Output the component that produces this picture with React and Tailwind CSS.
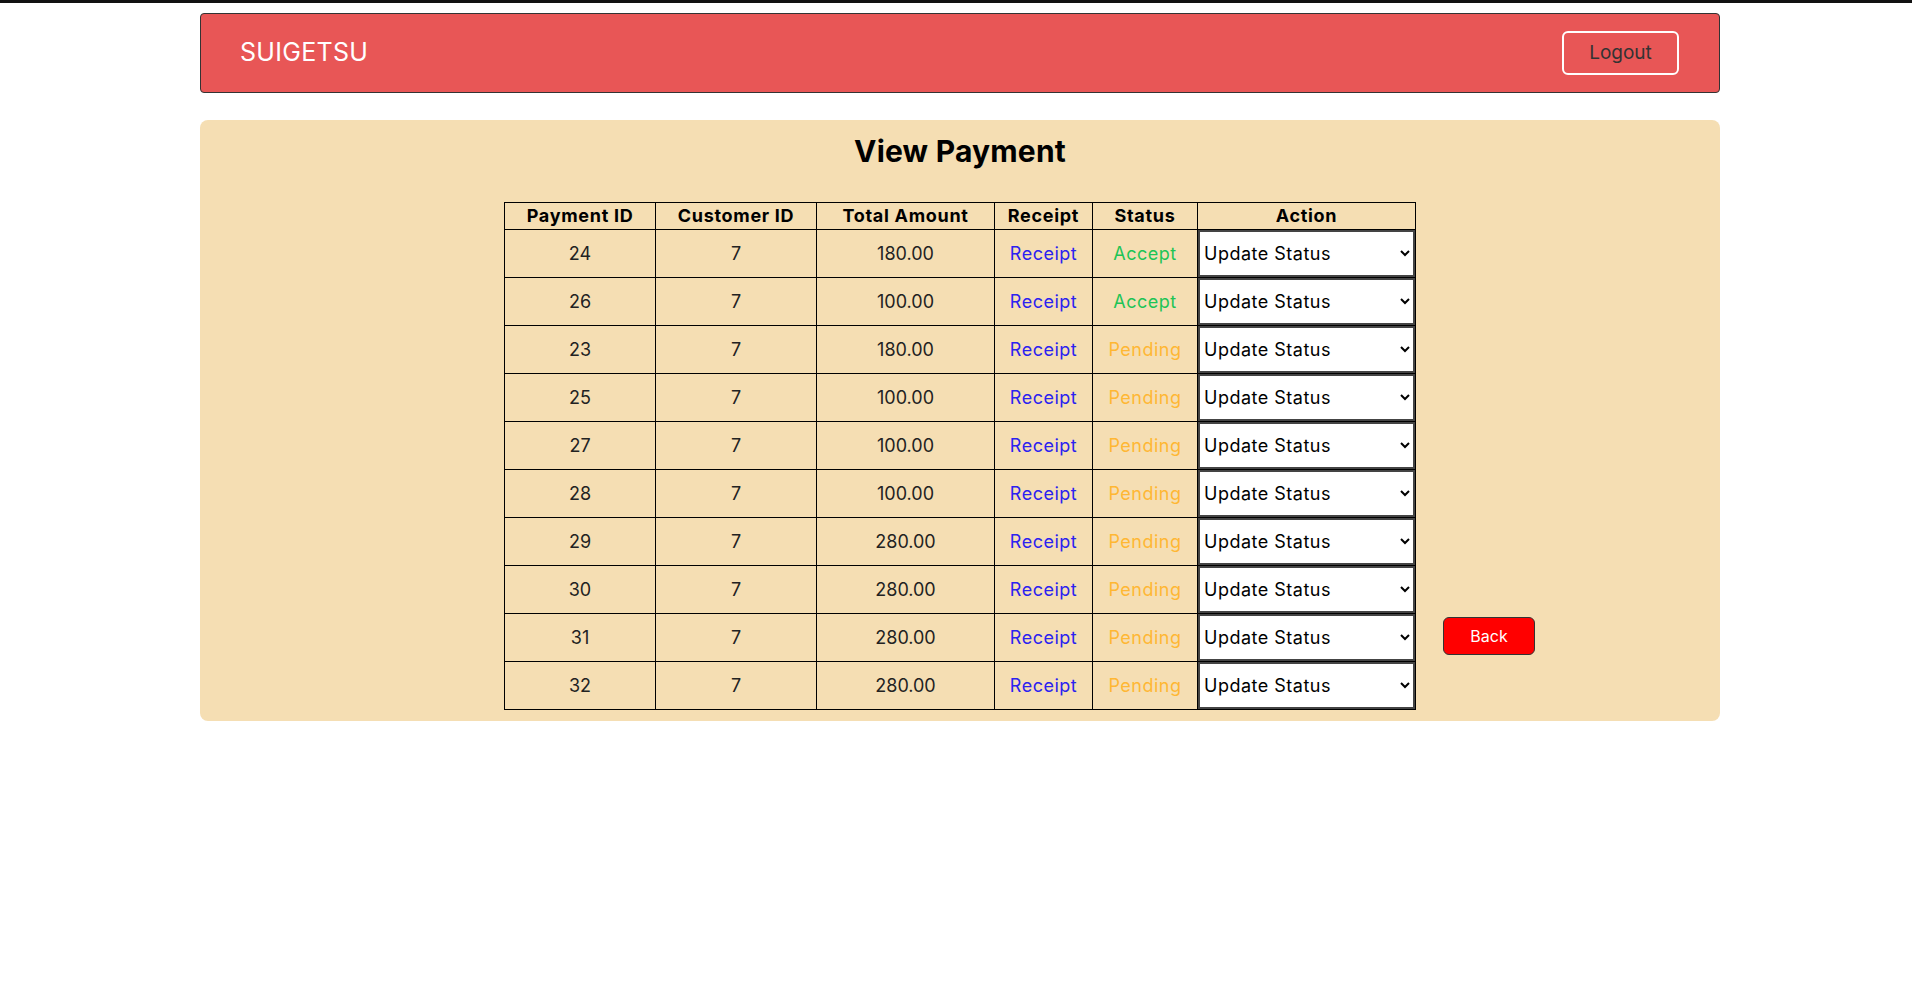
import React from "react";

const rows = [
  { id: 24, cust: 7, amt: "180.00", status: "Accept" },
  { id: 26, cust: 7, amt: "100.00", status: "Accept" },
  { id: 23, cust: 7, amt: "180.00", status: "Pending" },
  { id: 25, cust: 7, amt: "100.00", status: "Pending" },
  { id: 27, cust: 7, amt: "100.00", status: "Pending" },
  { id: 28, cust: 7, amt: "100.00", status: "Pending" },
  { id: 29, cust: 7, amt: "280.00", status: "Pending" },
  { id: 30, cust: 7, amt: "280.00", status: "Pending" },
  { id: 31, cust: 7, amt: "280.00", status: "Pending" },
  { id: 32, cust: 7, amt: "280.00", status: "Pending" },
];

export default function App() {
  return (
    <div
      className="min-h-[991px] bg-white text-black"
      style={{ fontFamily: "Inter, 'Noto Sans', sans-serif" }}
    >
      <div className="h-[3px] bg-[#111]" />
      <div className="ml-[200px] w-[1520px] pt-[10px]">
        <nav className="flex h-[80px] items-center justify-between rounded-[4px] border border-[#333] bg-[#e85656] pl-[39px] pr-[40px]">
          <span className="text-[25px] font-normal tracking-[0.3px] text-white">SUIGETSU</span>
          <button className="flex h-[44px] w-[117px] items-center justify-center rounded-[6px] border-2 border-white text-[19px] text-[#333]">
            Logout
          </button>
        </nav>

        <main className="mt-[27px] rounded-[8px] bg-[#f5deb3] pt-[10px] pb-[11px]">
          <h2 className="text-center text-[30px] font-bold leading-[42px] tracking-[0.2px]">View Payment</h2>
          <div className="mt-[30px] grid grid-cols-[1fr_auto_1fr]">
            <div />
            <table className="table-fixed border-collapse">
              <colgroup>
                <col className="w-[151px]" />
                <col className="w-[161px]" />
                <col className="w-[178px]" />
                <col className="w-[98px]" />
                <col className="w-[105px]" />
                <col className="w-[218px]" />
              </colgroup>
              <thead>
                <tr className="h-[27px]">
                  {["Payment ID", "Customer ID", "Total Amount", "Receipt", "Status", "Action"].map((h) => (
                    <th key={h} className="border border-black p-0 text-center text-[18px] font-bold leading-[26px] tracking-[0.7px]">
                      {h}
                    </th>
                  ))}
                </tr>
              </thead>
              <tbody>
                {rows.map((r) => (
                  <tr key={r.id} className="h-[48px]">
                    <td className="border border-black p-0 text-center text-[18px] text-[#222]">{r.id}</td>
                    <td className="border border-black p-0 text-center text-[18px] text-[#222]">{r.cust}</td>
                    <td className="border border-black p-0 text-center text-[18px] text-[#222]">{r.amt}</td>
                    <td className="border border-black p-0 text-center text-[18px] tracking-[0.5px]">
                      <a href="#" className="text-[#2b22f0]">Receipt</a>
                    </td>
                    <td
                      className={
                        "border border-black p-0 text-center text-[18px] tracking-[0.5px] " +
                        (r.status === "Accept" ? "text-[#1ec456]" : "text-[#ffb733]")
                      }
                    >
                      {r.status}
                    </td>
                    <td className="border border-black p-0">
                      <select className="block h-[47px] w-full border-2 border-[#444] bg-white pl-0 text-[18px] tracking-[0.5px] text-black">
                        <option>Update Status</option>
                        <option>Accept</option>
                        <option>Pending</option>
                        <option>Reject</option>
                      </select>
                    </td>
                  </tr>
                ))}
              </tbody>
            </table>
            <div className="flex items-end">
              <button className="mb-[55px] ml-[27px] h-[38px] w-[92px] rounded-[6px] border border-[#333] bg-[#ff0000] text-[16px] text-white">
                Back
              </button>
            </div>
          </div>
        </main>
      </div>
    </div>
  );
}
